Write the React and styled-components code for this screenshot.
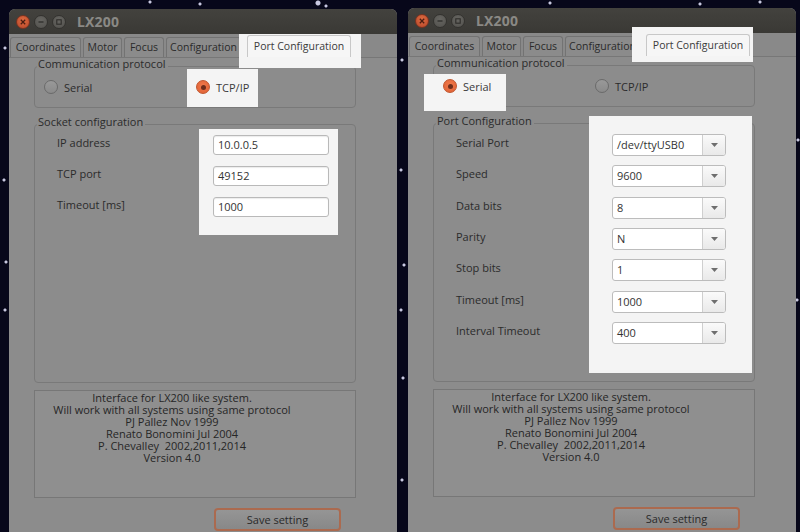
import React from 'react'
import styled, { createGlobalStyle, css } from 'styled-components'

const stars = [
  [318, 3, 2], [326, 6, 1], [150, 2, 1], [200, 4, 1], [402, 60, 1], [401, 170, 1],
  [404, 265, 1], [401, 310, 1], [403, 378, 1], [402, 480, 1], [5, 48, 1], [4, 180, 1],
  [6, 262, 1], [5, 310, 1], [798, 140, 1], [797, 300, 1], [550, 3, 1], [700, 4, 1], [760, 2, 1],
]

const GlobalStyle = createGlobalStyle`
  html, body { margin: 0; padding: 0; }
  body {
    width: 800px;
    height: 532px;
    overflow: hidden;
    background-color: #07071a;
    background-image: ${stars.map(([x, y, r]) => `radial-gradient(circle at ${x}px ${y}px, #c8c8e0 0 ${r}px, transparent ${r + 1}px)`).join(', ')};
    font-family: "Open Sans", "Noto Sans", sans-serif;
  }
`

// light box laid over the dimmed window, drawn behind the part it frames
const spot = css`
  position: relative;
  z-index: 1;
  &::before {
    content: '';
    position: absolute;
    inset: ${p => p.$spot};
    background: #f4f4f4;
    z-index: -1;
  }
`

const Desktop = styled.div`
  display: flex;
  align-items: flex-start;
  gap: 11px;
  padding-left: 9px;
  height: 532px;
  overflow: hidden;
`

const Window = styled.section`
  flex-shrink: 0;
  width: 388px;
  height: 540px;
  margin-top: ${p => p.$top}px;
  background: #8c8c8c;
  border-radius: 6px 6px 0 0;
  display: flex;
  flex-direction: column;
`

const TitleBar = styled.header`
  height: 25px;
  display: flex;
  align-items: center;
  gap: 4px;
  padding-left: 7px;
  background: linear-gradient(#43423e, #3a3935);
  border-radius: 6px 6px 0 0;
`

const WinButton = styled.span`
  width: 14px;
  height: 14px;
  box-sizing: border-box;
  border-radius: 50%;
  display: flex;
  align-items: center;
  justify-content: center;
  border: 1px solid ${p => (p.$close ? '#7a3320' : '#33322f')};
  background: ${p => (p.$close
    ? 'radial-gradient(circle at 50% 35%, #dc6a40, #b8472a)'
    : 'radial-gradient(circle at 50% 35%, #666561, #52514d)')};
`

const Title = styled.h1`
  margin: 0 0 0 7px;
  font-family: "Noto Sans", sans-serif;
  font-size: 14px;
  font-weight: 700;
  color: #8a8985;
  letter-spacing: 0.2px;
`

const TabBar = styled.nav`
  height: 23px;
  display: flex;
  align-items: flex-end;
  gap: 2px;
  padding-left: 1px;
  background: #898989;
  border-bottom: 1px solid #777;
`

const TabSpot = styled.div`
  margin-left: 4px;
  display: flex;
  ${spot}
`

const Tab = styled.div`
  width: ${p => p.$w}px;
  height: ${p => (p.$active ? 22 : 20)}px;
  box-sizing: border-box;
  text-align: center;
  font-size: 10.5px;
  line-height: ${p => (p.$active ? 20 : 19)}px;
  color: ${p => (p.$active ? '#3b3b3b' : '#2a2a2a')};
  background: ${p => (p.$active ? '#f6f6f6' : '#8b8b8b')};
  border: 1px solid ${p => (p.$active ? '#c8c8c8' : '#737373')};
  border-bottom: none;
  border-radius: 3px 3px 0 0;
  white-space: nowrap;
  overflow: hidden;
`

const Pane = styled.div`
  display: flex;
  flex-direction: column;
  padding-left: 25px;
`

const Group = styled.div`
  width: 322px;
  margin-top: ${p => p.$gap}px;
`

const GroupTitle = styled.div`
  position: relative;
  width: fit-content;
  margin-left: 3px;
  padding: 0 2px 0 1px;
  background: #8c8c8c;
  font-size: 11px;
  line-height: 12px;
  color: #2b2b2b;
`

const Frame = styled.div`
  margin-top: -4px;
  box-sizing: border-box;
  height: ${p => p.$h}px;
  border: 1px solid #797979;
  border-radius: 4px;
`

const RadioRow = styled(Frame)`
  display: grid;
  grid-template-columns: 1fr 1fr;
  align-items: center;
  padding: 0 7px 0 9px;
`

const RadioOption = styled.label`
  justify-self: start;
  display: inline-flex;
  align-items: center;
  gap: 6px;
  font-size: 11px;
  color: ${p => (p.$checked ? '#3a3a3a' : '#2b2b2b')};
  ${p => p.$spot && spot}
`

const RadioDot = styled.span`
  width: 14px;
  height: 14px;
  box-sizing: border-box;
  border-radius: 50%;
  display: flex;
  align-items: center;
  justify-content: center;
  border: 1px solid ${p => (p.$checked ? '#c0562e' : '#6a6a6a')};
  background: ${p => (p.$checked
    ? 'radial-gradient(circle at 50% 40%, #f07a4c, #df5f33)'
    : 'linear-gradient(#999, #8a8a8a)')};
  &::after {
    content: '';
    width: 5px;
    height: 5px;
    border-radius: 50%;
    background: ${p => (p.$checked ? '#6e2e1c' : 'transparent')};
  }
`

const FormFrame = styled(Frame)`
  display: flex;
  align-items: flex-start;
  padding: ${p => p.$pt}px 0 0 22px;
`

const LabelCol = styled.div`
  width: 156px;
  display: flex;
  flex-direction: column;
  gap: ${p => p.$gap}px;
`

const Label = styled.div`
  height: ${p => p.$h}px;
  font-size: 11px;
  line-height: ${p => p.$h - 4}px;
  color: #2b2b2b;
  white-space: nowrap;
`

const FieldCol = styled.div`
  display: flex;
  flex-direction: column;
  gap: ${p => p.$gap}px;
  ${spot}
`

const TextInput = styled.div`
  width: 116px;
  height: 20px;
  box-sizing: border-box;
  padding-left: 4px;
  border: 1px solid #b9b9b9;
  border-radius: 3px;
  background: #fff;
  box-shadow: inset 0 1px 1px rgba(0, 0, 0, 0.08);
  font-size: 11px;
  line-height: 18px;
  color: #333;
`

const Combo = styled.div`
  width: 114px;
  height: 22px;
  box-sizing: border-box;
  display: flex;
  border: 1px solid #bcbcbc;
  border-radius: 3px;
  background: #fff;
  overflow: hidden;
`

const ComboText = styled.span`
  flex: 1;
  padding-left: 4px;
  font-size: 11px;
  line-height: 20px;
  color: #333;
`

const ComboArrow = styled.span`
  width: 22px;
  display: flex;
  align-items: center;
  justify-content: center;
  border-left: 1px solid #cfcfcf;
  background: linear-gradient(#fafafa, #e9e9e9);
`

const About = styled.div`
  width: 322px;
  height: 108px;
  box-sizing: border-box;
  margin-top: 7px;
  padding: 1px 46px 0 0;
  border: 1px solid #777;
  background: #8f8f8f;
  text-align: center;
  font-size: 11px;
  line-height: 12px;
  color: #262626;
  white-space: pre;
`

const Footer = styled.div`
  width: 322px;
  display: flex;
  justify-content: flex-end;
  padding-right: 15px;
  box-sizing: border-box;
  margin-top: 10px;
`

const SaveButton = styled.button`
  width: 127px;
  height: 23px;
  border: 2px solid #ab6a4f;
  border-radius: 4px;
  background: linear-gradient(#959595, #888);
  font-family: inherit;
  font-size: 11px;
  color: #2a2a2a;
  padding: 0;
`

const tabs = [['Coordinates', 71], ['Motor', 39], ['Focus', 40], ['Configuration', 75]]

const aboutLines = [
  'Interface for LX200 like system.',
  'Will work with all systems using same protocol',
  'PJ Pallez Nov 1999',
  'Renato Bonomini Jul 2004',
  'P. Chevalley  2002,2011,2014',
  'Version 4.0',
]

const socketFields = [
  ['IP address', '10.0.0.5'],
  ['TCP port', '49152'],
  ['Timeout [ms]', '1000'],
]

const portFields = [
  ['Serial Port', '/dev/ttyUSB0'],
  ['Speed', '9600'],
  ['Data bits', '8'],
  ['Parity', 'N'],
  ['Stop bits', '1'],
  ['Timeout [ms]', '1000'],
  ['Interval Timeout', '400'],
]

function WindowButtons() {
  return (
    <>
      <WinButton $close>
        <svg width="6" height="6" viewBox="0 0 6 6"><path d="M0.8 0.8 5.2 5.2 M5.2 0.8 0.8 5.2" stroke="#4a1d12" strokeWidth="1.3" /></svg>
      </WinButton>
      <WinButton>
        <svg width="6" height="6" viewBox="0 0 6 6"><path d="M0.5 3 H5.5" stroke="#2e2d2a" strokeWidth="1.3" /></svg>
      </WinButton>
      <WinButton>
        <svg width="6" height="6" viewBox="0 0 6 6"><rect x="0.8" y="0.8" width="4.4" height="4.4" fill="none" stroke="#2e2d2a" strokeWidth="1.1" /></svg>
      </WinButton>
    </>
  )
}

function Arrow() {
  return (
    <svg width="7" height="4" viewBox="0 0 7 4"><path d="M0 0 H7 L3.5 4 Z" fill="#6e6e6e" /></svg>
  )
}

function LxWindow({ top, tabSpot, serial, radioSpot, children }) {
  return (
    <Window $top={top}>
      <TitleBar>
        <WindowButtons />
        <Title>LX200</Title>
      </TitleBar>
      <TabBar>
        {tabs.map(([t, w]) => <Tab key={t} $w={w}>{t}</Tab>)}
        <TabSpot $spot={tabSpot}>
          <Tab $active $w={104}>Port Configuration</Tab>
        </TabSpot>
      </TabBar>
      <Pane>
        <Group $gap={0}>
          <GroupTitle>Communication protocol</GroupTitle>
          <RadioRow $h={42}>
            <RadioOption $checked={serial} $spot={serial ? radioSpot : undefined}>
              <RadioDot $checked={serial} />Serial
            </RadioOption>
            <RadioOption $checked={!serial} $spot={serial ? undefined : radioSpot}>
              <RadioDot $checked={!serial} />TCP/IP
            </RadioOption>
          </RadioRow>
        </Group>
        {children}
        <About>
          {aboutLines.map(l => <div key={l}>{l}</div>)}
        </About>
        <Footer>
          <SaveButton>Save setting</SaveButton>
        </Footer>
      </Pane>
    </Window>
  )
}

export default function App() {
  return (
    <Desktop>
      <GlobalStyle />
      <LxWindow top={9} tabSpot="-1px -10px -11px -8px" radioSpot="-11px -9px -12px -9px">
        <Group $gap={8}>
          <GroupTitle>Socket configuration</GroupTitle>
          <FormFrame $h={259} $pt={10}>
            <LabelCol $gap={11}>
              {socketFields.map(([label]) => <Label key={label} $h={20}>{label}</Label>)}
            </LabelCol>
            <FieldCol $gap={11} $spot="-6px -9px -18px -14px">
              {socketFields.map(([label, value]) => <TextInput key={label}>{value}</TextInput>)}
            </FieldCol>
          </FormFrame>
        </Group>
      </LxWindow>
      <LxWindow top={8} serial tabSpot="-7px -3px -6px -14px" radioSpot="-5px -15px -17px -19px">
        <Group $gap={8}>
          <GroupTitle>Port Configuration</GroupTitle>
          <FormFrame $h={259} $pt={10}>
            <LabelCol $gap={9.33}>
              {portFields.map(([label]) => <Label key={label} $h={22}>{label}</Label>)}
            </LabelCol>
            <FieldCol $gap={9.33} $spot="-18px -26px -29px -23px">
              {portFields.map(([label, value]) => (
                <Combo key={label}>
                  <ComboText>{value}</ComboText>
                  <ComboArrow><Arrow /></ComboArrow>
                </Combo>
              ))}
            </FieldCol>
          </FormFrame>
        </Group>
      </LxWindow>
    </Desktop>
  )
}
